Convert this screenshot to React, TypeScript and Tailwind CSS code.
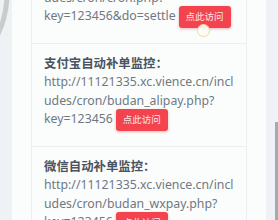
import React from 'react';

type Item = {
  title?: string;
  head: string;
  tail: string;
};

const items: Item[] = [
  { head: 'http://11121335.xc.vience.cn/includes/cron/cron.php?', tail: 'key=123456&do=settle' },
  { title: '支付宝自动补单监控：', head: 'http://11121335.xc.vience.cn/includes/cron/budan_alipay.php?', tail: 'key=123456' },
  { title: '微信自动补单监控：', head: 'http://11121335.xc.vience.cn/includes/cron/budan_wxpay.php?', tail: 'key=123456' },
];

const VisitButton: React.FC<{ ripple?: boolean }> = ({ ripple }) => (
  <span className="relative ml-[3px] inline-flex h-[22px] w-[52px] -my-[3px] items-center justify-center rounded-[3px] bg-[#f3434f] align-middle text-[9.5px] leading-none text-[#fde7e8] shadow-[0_1px_3px_rgba(200,40,50,0.35)]">
    点此访问
    {ripple && (
      <span className="absolute left-[18px] top-[18px] h-[13px] w-[13px] rounded-full border-[1.5px] border-[#f8d98f] bg-[#fffdf6]/90" />
    )}
  </span>
);

export default function App() {
  return (
    <div
      className="relative h-[220px] w-[278px] overflow-hidden bg-[#eef2f4]"
      style={{ fontFamily: '"Noto Sans", "Noto Sans CJK SC", sans-serif' }}
    >
      <svg className="absolute left-0 top-0" width="12" height="40" viewBox="0 0 12 40">
        <path d="M7 -2 C 6 12, 4 22, -2 34" stroke="#c9cccd" strokeWidth="5" fill="none" />
      </svg>
      <div className="ml-[12px] mt-[-30px] w-[254px] bg-[#fbfdfc] px-[19px]">
        <ul className="border-x border-[#eceff0]">
          {items.map((item, i) => (
            <li
              key={i}
              className={`px-[12px] pb-[17px] ${i === 0 ? 'pt-0' : 'pt-[11px] border-t border-[#eceff0]'}`}
            >
              {item.title && (
                <div className="text-[12.4px] font-bold leading-[18.5px] text-[#4a5360]">{item.title}</div>
              )}
              <p className="text-[12.3px] leading-[18.5px] text-[#6f7883] [overflow-wrap:anywhere]">
                {item.head}
                <wbr />
                {item.tail}
                <VisitButton ripple={i === 0} />
              </p>
            </li>
          ))}
        </ul>
      </div>
      <div className="absolute right-0 top-[122px] h-[98px] w-[3px] bg-[#a7aaac]" />
    </div>
  );
}
